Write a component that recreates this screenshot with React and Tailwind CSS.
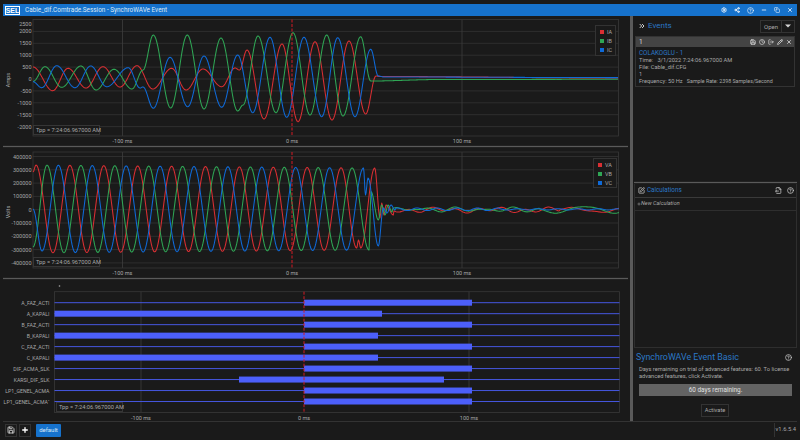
import React from "react";
import { Settings, Share2, CircleHelp, Minus, Copy, X, ChevronsRight, Save, Clock, LogOut, Pencil, SquarePen, FileOutput, Plus } from "lucide-react";

const RED = "#d92f33", GREEN = "#2fa655", BLUE = "#0f6ad8";

function wave(pts) {
  let d = `M${pts[0][0]} ${pts[0][1]}`;
  for (let i = 0; i < pts.length - 1; i++) {
    const [x0, y0] = pts[i], [x1, y1] = pts[i + 1];
    const n = Math.max(2, Math.ceil((x1 - x0) * 1.5));
    for (let k = 1; k <= n; k++) {
      const t = k / n;
      const x = x0 + (x1 - x0) * t;
      const y = y0 + ((y1 - y0) * (1 - Math.cos(Math.PI * t))) / 2;
      d += `L${x.toFixed(2)} ${y.toFixed(2)}`;
    }
  }
  return d;
}

const IA = [[33,67],[52.7,90.7],[68,68.3],[86,88],[103,66.7],[120,87],[137,65.7],[152.7,89],[171.7,68.3],[186,90],[203,69],[221.7,86.7],[235,68],[239.5,70],[247,50],[264,119],[282,44],[298,121.7],[315,41.7],[332,120],[349,41],[365.7,114],[376,76],[380,76.5],[618,78]];
const IB = [[33,81.5],[45,66.7],[61.7,87.3],[81,66],[96,90],[114,69.3],[132,89],[143,70],[153.3,35],[170.7,108],[187.3,35],[204,109],[221,38],[237.7,111],[243,105],[258,36],[276,112.7],[293,32.7],[310,115],[326.7,35],[343,116],[360.7,36.7],[370.7,81],[440,79.5],[618,79.3]];
const IC = [[33,81.7],[41.7,87.7],[56.7,65.7],[75,87.7],[90.7,66],[106.7,86.7],[128.3,67.7],[140,88],[143,87],[153.3,108.3],[170,57.3],[187.7,106.7],[204,56],[221.7,107.3],[237.7,55],[252.7,112.7],[270,37.3],[286.7,117.3],[304,37.3],[321.7,116.7],[337.7,37.7],[355,116.7],[370.7,49.3],[378.3,76],[384,77],[618,77.6]];

function sine(first, count) {
  const out = [];
  for (let k = 0; k < count; k++) {
    const x = first + k * 16.95;
    const a = 44 - ((x - 33) / 330) * 3;
    out.push([x, k % 2 === 0 ? 209 - a : 209 + a]);
  }
  return out;
}
function ring(x0, fn) {
  const out = [];
  for (let x = x0; x <= 619; x += 1) out.push([x, fn(x)]);
  return out;
}
function line(pts) {
  return "L" + pts.map((p) => `${p[0].toFixed(2)} ${p[1].toFixed(2)}`).join("L");
}
const VA = wave([[33,172],...sine(36,19),[356.7,248],[358.5,240],[360.7,248],[374.7,168],[380,218],[381.7,203],[384,215],[386,205],[393.3,215]]) +
  line(ring(394, (x) => 210 + 1.8 * Math.sin(x / 3.7 + 1) * (x < 560 ? 1 : 0.3) + 1.2 * Math.sin(x / 9) + (x > 560 ? -3 * Math.sin((x - 560) / 9) : 0)));
const VB = wave([[33,247],...sine(47,19),[369,250],[371,191.7],[378.3,220],[381.7,205],[385,215],[388,205],[392,212]]) +
  line(ring(393, (x) => 209.5 + 2.6 * Math.sin(x / 4.6) * (x < 540 ? Math.abs(Math.sin(x / 22)) : 0.2) + (x > 540 ? 3.2 * Math.sin((x - 540) / 9.5) : 0)));
const VC = wave([[33,209],[42,251],...sine(58.4,19),[365.5,195],[368,178],[378.3,246],[383.3,208],[387,213],[391,205],[395,210]]) +
  line(ring(396, (x) => 209.3 + 1.3 * Math.sin(x / 3.2) * (x < 500 ? 1 : 0.5)));

const lbl = "fill-[#a8a8a8] text-[5.5px]";
const digiLbl = "fill-[#a8a8a8] text-[5.2px]";

function Grid({ x0, x1, y0, y1, ys, xs }) {
  return (
    <g>
      {ys.map((y) => <line key={y} x1={x0} x2={x1} y1={y} y2={y} stroke="#333" strokeWidth="0.8" />)}
      {xs.map((x) => <line key={x} x1={x} x2={x} y1={y0} y2={y1} stroke="#3d3d3d" strokeWidth="0.8" />)}
      <rect x={x0} y={y0} width={x1 - x0} height={y1 - y0} fill="none" stroke="#383838" strokeWidth="0.8" />
    </g>
  );
}
function Cursor({ x, y0, y1 }) {
  return <line x1={x} x2={x} y1={y0} y2={y1} stroke="#d21a24" strokeWidth="1" strokeDasharray="3 1.5" />;
}
function XLabels({ y, xs }) {
  return (
    <g>
      {["-100 ms", "0 ms", "100 ms"].map((t, i) => (
        <text key={t} x={xs[i]} y={y} textAnchor="middle" className={lbl}>{t}</text>
      ))}
    </g>
  );
}
function YLabels({ items, x = 31.5 }) {
  return (
    <g>
      {items.map(([t, y]) => <text key={t} x={x} y={y + 2} textAnchor="end" className={lbl}>{t}</text>)}
    </g>
  );
}
function Tpp({ className }) {
  return (
    <div className={`absolute h-[10px] w-[67px] border border-[#363636] bg-[#1a1a1a] text-[5.7px] leading-[8px] text-[#a8a8a8] pl-[2px] whitespace-nowrap ${className}`}>
      Tpp = 7:24:06.967000 AM
    </div>
  );
}
function Legend({ className, items }) {
  return (
    <div className={`absolute flex flex-col gap-[3px] border border-[#333] bg-[#1a1a1a] py-[3px] pl-[4px] text-[5.5px] leading-[6px] text-[#a8a8a8] ${className}`}>
      {items.map(([t, c]) => (
        <div key={t} className="flex h-[6px] items-center gap-[3px]">
          <span className="h-[4px] w-[4px]" style={{ background: c }} />
          <span>{t}</span>
        </div>
      ))}
    </div>
  );
}

function Currents() {
  const ys = [31.4, 43.3, 55.2, 67.1, 79, 90.9, 102.8, 114.7, 126.6];
  return (
    <div className="relative h-[129px] w-full">
      <svg viewBox="3 16 625 129" className="block h-full w-full">
        <Grid x0={33} x1={618.5} y0={19.5} y1={136} ys={ys} xs={[122.5, 462]} />
        <YLabels items={[["2500",23.5],["2000",31.4],["1500",43.3],["1000",55.2],["500",67.1],["0",79],["-500",90.9],["-1000",102.8],["-1500",114.7],["-2000",126.6]]} />
        <text transform="translate(10 80) rotate(-90)" textAnchor="middle" className={lbl}>Amps</text>
        <g fill="none" strokeWidth="1.05" strokeLinejoin="round">
          <path d={wave(IA)} stroke={RED} />
          <path d={wave(IB)} stroke={GREEN} />
          <path d={wave(IC)} stroke={BLUE} />
        </g>
        <Cursor x={292} y0={19.5} y1={136} />
        <XLabels y={143} xs={[122.5, 292, 462]} />
      </svg>
      <Tpp className="left-[30px] top-[109px]" />
      <Legend className="left-[592px] top-[9px] h-[31px] w-[21px]" items={[["IA", RED], ["IB", GREEN], ["IC", BLUE]]} />
    </div>
  );
}
function Voltages() {
  const ys = [156.5, 169.8, 183.1, 196.4, 209.7, 223, 236.3, 249.6, 262.9];
  const labs = [["400000",156.5],["300000",169.8],["200000",183.1],["100000",196.4],["0",209.7],["-100000",223],["-200000",236.3],["-300000",249.6],["-400000",262.9]];
  return (
    <div className="relative h-[129px] w-full">
      <svg viewBox="3 148 625 129" className="block h-full w-full">
        <Grid x0={33} x1={618.5} y0={152} y1={268} ys={ys} xs={[122.5, 462]} />
        <YLabels items={labs} />
        <text transform="translate(10 212) rotate(-90)" textAnchor="middle" className={lbl}>Volts</text>
        <g fill="none" strokeWidth="1.05" strokeLinejoin="round">
          <path d={VA} stroke={RED} />
          <path d={VB} stroke={GREEN} />
          <path d={VC} stroke={BLUE} />
        </g>
        <Cursor x={292} y0={152} y1={268} />
        <XLabels y={275} xs={[122.5, 292, 462]} />
      </svg>
      <Tpp className="left-[30px] top-[109px]" />
      <Legend className="left-[590px] top-[10px] h-[30px] w-[24px]" items={[["VA", RED], ["VB", GREEN], ["VC", BLUE]]} />
    </div>
  );
}
const ROWS = [
  ["A_FAZ_ACTI", 304, 472], ["A_KAPALI", 54.5, 382], ["B_FAZ_ACTI", 304, 472], ["B_KAPALI", 54.5, 378],
  ["C_FAZ_ACTI", 304, 472], ["C_KAPALI", 54.5, 378], ["DIF_ACMA_SLK", 304, 472], ["KARSI_DIF_SLK", 239, 444],
  ["LP1_GENEL_ACMA", 304, 472], ["LP1_GENEL_ACMA`", 304, 472],
];
function Digital() {
  return (
    <div className="relative h-[142px] w-full">
      <svg viewBox="3 279 625 142" className="block h-full w-full">
        <Grid x0={54.5} x1={619.5} y0={290.7} y1={411.5} ys={[]} xs={[141, 469]} />
        <circle cx="59.5" cy="285" r="0.8" fill="#aaa" />
        {ROWS.map(([t, a, b], i) => {
          const y = 301.7 + i * 10.98;
          return (
            <g key={i}>
              <text x="49.5" y={y + 2} textAnchor="end" className={digiLbl}>{t}</text>
              <line x1="54.5" x2="619.5" y1={y} y2={y} stroke="#4657e0" strokeWidth="1" />
              <rect x={a} y={y - 3} width={b - a} height="6" fill="#4c5ffa" />
            </g>
          );
        })}
        <Cursor x={304} y0={290.7} y1={411.5} />
        <XLabels y={419} xs={[141, 304, 469]} />
      </svg>
      <Tpp className="left-[53px] top-[122px]" />
    </div>
  );
}

function HSplit() {
  return <div className="h-[3px] shrink-0 border-y-[0.5px] border-[#222] bg-[#5a5a5a]" />;
}

export default function App() {
  const ic = { strokeWidth: 3 };
  return (
    <div className="flex h-[440px] w-[800px] flex-col overflow-hidden bg-[#1a1a1a] pt-[4px] pb-[3px] px-[3px] font-['Roboto','Open_Sans',sans-serif] text-[#a8a8a8]">
      <div className="flex h-[12px] shrink-0 items-center bg-[#1672cc] text-white">
        <span className="ml-[2px] flex h-[9px] w-[15px] items-center justify-center border border-white font-['Liberation_Sans',sans-serif] text-[7px] font-bold leading-none">SEL</span>
        <span className="ml-[5px] text-[6.4px] leading-none text-[#dbe9f7]">Cable_dif.Comtrade.Session - SynchroWAVe Event</span>
        <div className="ml-auto flex items-center gap-[7px] pr-[4px] text-white">
          <Settings size={6} {...ic} />
          <Share2 size={6} {...ic} />
          <CircleHelp size={7} strokeWidth={2} />
          <Minus size={6} {...ic} />
          <Copy size={6} strokeWidth={2} />
          <X size={6} {...ic} />
        </div>
      </div>

      <div className="flex min-h-0 flex-1">
        <div className="flex w-[625px] shrink-0 flex-col">
          <Currents />
          <HSplit />
          <Voltages />
          <HSplit />
          <Digital />
        </div>
        <div className="ml-[2px] w-[3px] shrink-0 bg-[#5a5a5a]" />
        <div className="flex min-w-0 flex-1 flex-col pl-[1px]">
          <div className="flex h-[165px] shrink-0 flex-col pl-[1px] pr-[2px]">
            <div className="mt-[3px] flex h-[14px] items-center">
              <ChevronsRight size={8} strokeWidth={3} className="ml-[3px] text-[#cfcfcf]" />
              <span className="ml-[2px] text-[8px] leading-none text-[#2b78c6]">Events</span>
              <div className="ml-auto flex h-[13px] border border-[#333] text-[6px]">
                <span className="flex w-[21px] items-center justify-center border-r border-[#333]">Open</span>
                <span className="flex w-[12px] items-center justify-center">
                  <svg width="6" height="4" viewBox="0 0 6 4"><path d="M0 0.5h6L3 3.5z" fill="#d5d5d5" /></svg>
                </span>
              </div>
            </div>
            <div className="mt-[3px] h-[51px] border border-[#333]">
              <div className="flex h-[10px] items-center bg-[#444] pl-[3px] pr-[2px] text-[6.5px] leading-none text-[#ddd]">
                <span>1</span>
                <div className="ml-auto flex items-center gap-[3px] text-[#e0e0e0]">
                  <Save size={6} strokeWidth={3} />
                  <Clock size={6} strokeWidth={2.5} />
                  <LogOut size={6} strokeWidth={2.5} />
                  <Pencil size={6} strokeWidth={3} />
                  <X size={6} strokeWidth={3} />
                </div>
              </div>
              <div className="px-[3px] pt-[2.5px] text-[5.7px] leading-[7px] whitespace-nowrap">
                <div className="text-[6.3px] text-[#2b78c6]">COLAKOGLU - 1</div>
                <div>Time:&nbsp;&nbsp; 3/1/2022 7:24:06.967000 AM</div>
                <div>File: Cable_dif.CFG</div>
                <div>1</div>
                <div>Frequency: 50 Hz&nbsp;&nbsp; <span className="text-[5.3px]">Sample Rate: 2398 Samples/Second</span></div>
              </div>
            </div>
          </div>
          <HSplit />
          <div className="flex h-[164px] shrink-0 flex-col border-x border-b border-[#2e2e2e]">
            <div className="flex h-[14px] shrink-0 items-center border-b border-[#3a3a3a] pl-[3px] pr-[2px]">
              <SquarePen size={7} strokeWidth={2.5} className="text-[#ccc]" />
              <span className="ml-[2px] text-[6.3px] leading-none text-[#2b78c6]">Calculations</span>
              <div className="ml-auto flex items-center gap-[5px] text-[#ccc]">
                <FileOutput size={7} strokeWidth={2.5} />
                <CircleHelp size={7} strokeWidth={2.5} />
              </div>
            </div>
            <div className="flex h-[13px] shrink-0 items-center border-b border-[#2e2e2e] pl-[2px] text-[5.5px] italic leading-none">
              <Plus size={4} strokeWidth={3} />
              <span>New Calculation</span>
            </div>
          </div>
          <div className="flex min-h-0 flex-1 flex-col pl-[2px] pr-[3px]">
            <div className="mt-[2px] flex items-center">
              <span className="text-[8.9px] leading-[14px] text-[#2b78c6]">SynchroWAVe Event Basic</span>
              <CircleHelp size={7} strokeWidth={2.5} className="ml-auto mr-[2px] text-[#ccc]" />
            </div>
            <p className="ml-[3px] mt-[2px] text-[5.7px] leading-[7px]">Days remaining on trial of advanced features: 60. To license advanced features, click Activate.</p>
            <div className="ml-[3px] mt-[4px] flex h-[12px] w-[153px] shrink-0 items-center justify-center bg-[#636363] text-[6.4px] leading-none text-[#e0e0e0]">60 days remaining.</div>
            <button className="mx-auto mt-[8px] flex h-[13px] w-[28px] items-center justify-center border border-[#333] text-[5.7px] leading-none">Activate</button>
          </div>
        </div>
      </div>

      <div className="flex h-[16px] shrink-0 items-center border-t border-[#333] pt-[1px]">
        <span className="ml-[2px] flex h-[13px] w-[12px] items-center justify-center border border-[#333] text-[#ddd]"><Save size={8} strokeWidth={2.5} /></span>
        <span className="ml-[2px] flex h-[13px] w-[12px] items-center justify-center border border-[#333] text-white"><Plus size={8} strokeWidth={4} /></span>
        <span className="ml-[5px] flex h-[13px] w-[25px] items-center justify-center rounded-[1px] bg-[#1672cc] text-[6px] leading-none text-[#dbe9f7]">default</span>
        <span className="ml-auto flex h-[14px] items-center border-l border-[#333] pl-[1px] pr-[1px] text-[5.8px] leading-none">v1.6.5.4</span>
      </div>
    </div>
  );
}
